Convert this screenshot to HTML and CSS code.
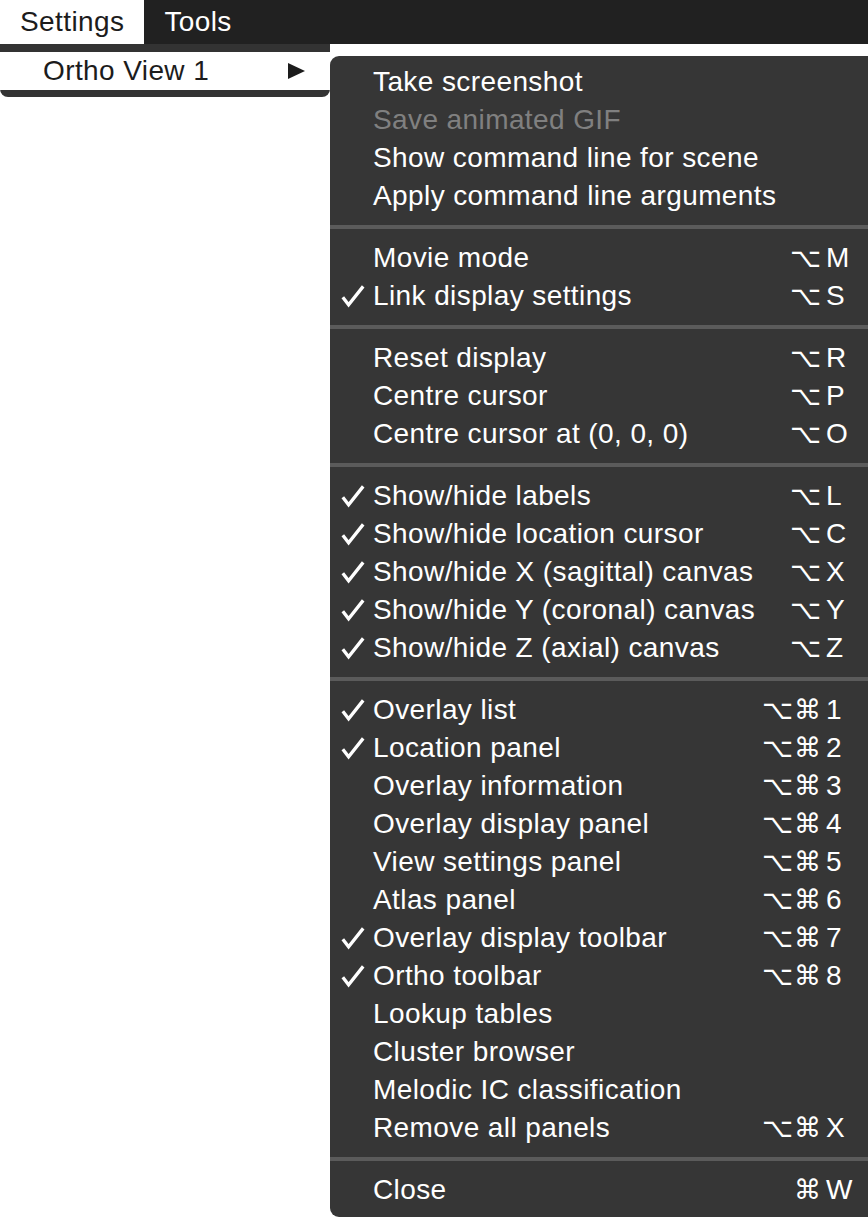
FILE: index.html
```html
<!DOCTYPE html>
<html>
<head>
<meta charset="utf-8">
<link rel="stylesheet" href="styles.css">
</head>
<body>
<div class="menubar">
  <div class="mb-item active">Settings</div>
  <div class="mb-item">Tools</div>
</div>
<div class="stage">
  <div class="dropdown">
    <div class="dd-row">
      <span class="dd-label">Ortho View 1</span>
      <svg class="arrow" width="17" height="16" viewBox="0 0 17 16"><polygon points="0,0 17,8 0,16" fill="#1c1c1c"/></svg>
    </div>
  </div>
  <div class="submenu">
    <div class="item"><span class="check"></span><span class="label">Take screenshot</span></div>
    <div class="item disabled"><span class="check"></span><span class="label">Save animated GIF</span></div>
    <div class="item"><span class="check"></span><span class="label">Show command line for scene</span></div>
    <div class="item"><span class="check"></span><span class="label">Apply command line arguments</span></div>
    <div class="sep"></div>
    <div class="item"><span class="check"></span><span class="label">Movie mode</span><span class="mods">⌥</span><span class="key">M</span></div>
    <div class="item"><span class="check"><svg class="tick" width="26" height="24" viewBox="0 0 26 24"><path d="M2.8 13.2 L8.6 20.8 L23.2 2.4"/></svg></span><span class="label">Link display settings</span><span class="mods">⌥</span><span class="key">S</span></div>
    <div class="sep"></div>
    <div class="item"><span class="check"></span><span class="label">Reset display</span><span class="mods">⌥</span><span class="key">R</span></div>
    <div class="item"><span class="check"></span><span class="label">Centre cursor</span><span class="mods">⌥</span><span class="key">P</span></div>
    <div class="item"><span class="check"></span><span class="label">Centre cursor at (0, 0, 0)</span><span class="mods">⌥</span><span class="key">O</span></div>
    <div class="sep"></div>
    <div class="item"><span class="check"><svg class="tick" width="26" height="24" viewBox="0 0 26 24"><path d="M2.8 13.2 L8.6 20.8 L23.2 2.4"/></svg></span><span class="label">Show/hide labels</span><span class="mods">⌥</span><span class="key">L</span></div>
    <div class="item"><span class="check"><svg class="tick" width="26" height="24" viewBox="0 0 26 24"><path d="M2.8 13.2 L8.6 20.8 L23.2 2.4"/></svg></span><span class="label">Show/hide location cursor</span><span class="mods">⌥</span><span class="key">C</span></div>
    <div class="item"><span class="check"><svg class="tick" width="26" height="24" viewBox="0 0 26 24"><path d="M2.8 13.2 L8.6 20.8 L23.2 2.4"/></svg></span><span class="label">Show/hide X (sagittal) canvas</span><span class="mods">⌥</span><span class="key">X</span></div>
    <div class="item"><span class="check"><svg class="tick" width="26" height="24" viewBox="0 0 26 24"><path d="M2.8 13.2 L8.6 20.8 L23.2 2.4"/></svg></span><span class="label">Show/hide Y (coronal) canvas</span><span class="mods">⌥</span><span class="key">Y</span></div>
    <div class="item"><span class="check"><svg class="tick" width="26" height="24" viewBox="0 0 26 24"><path d="M2.8 13.2 L8.6 20.8 L23.2 2.4"/></svg></span><span class="label">Show/hide Z (axial) canvas</span><span class="mods">⌥</span><span class="key">Z</span></div>
    <div class="sep"></div>
    <div class="item"><span class="check"><svg class="tick" width="26" height="24" viewBox="0 0 26 24"><path d="M2.8 13.2 L8.6 20.8 L23.2 2.4"/></svg></span><span class="label">Overlay list</span><span class="mods">⌥⌘</span><span class="key">1</span></div>
    <div class="item"><span class="check"><svg class="tick" width="26" height="24" viewBox="0 0 26 24"><path d="M2.8 13.2 L8.6 20.8 L23.2 2.4"/></svg></span><span class="label">Location panel</span><span class="mods">⌥⌘</span><span class="key">2</span></div>
    <div class="item"><span class="check"></span><span class="label">Overlay information</span><span class="mods">⌥⌘</span><span class="key">3</span></div>
    <div class="item"><span class="check"></span><span class="label">Overlay display panel</span><span class="mods">⌥⌘</span><span class="key">4</span></div>
    <div class="item"><span class="check"></span><span class="label">View settings panel</span><span class="mods">⌥⌘</span><span class="key">5</span></div>
    <div class="item"><span class="check"></span><span class="label">Atlas panel</span><span class="mods">⌥⌘</span><span class="key">6</span></div>
    <div class="item"><span class="check"><svg class="tick" width="26" height="24" viewBox="0 0 26 24"><path d="M2.8 13.2 L8.6 20.8 L23.2 2.4"/></svg></span><span class="label">Overlay display toolbar</span><span class="mods">⌥⌘</span><span class="key">7</span></div>
    <div class="item"><span class="check"><svg class="tick" width="26" height="24" viewBox="0 0 26 24"><path d="M2.8 13.2 L8.6 20.8 L23.2 2.4"/></svg></span><span class="label">Ortho toolbar</span><span class="mods">⌥⌘</span><span class="key">8</span></div>
    <div class="item"><span class="check"></span><span class="label">Lookup tables</span></div>
    <div class="item"><span class="check"></span><span class="label">Cluster browser</span></div>
    <div class="item"><span class="check"></span><span class="label">Melodic IC classification</span></div>
    <div class="item"><span class="check"></span><span class="label">Remove all panels</span><span class="mods">⌥⌘</span><span class="key">X</span></div>
    <div class="sep"></div>
    <div class="item"><span class="check"></span><span class="label">Close</span><span class="mods">⌘</span><span class="key">W</span></div>
  </div>
</div>
</body>
</html>
```
FILE: styles.css
```css
html, body {
  margin: 0;
  padding: 0;
  background: #ffffff;
}
body {
  font-family: "Liberation Sans", Arial, sans-serif;
  font-size: 28px;
  letter-spacing: 0.4px;
  width: 868px;
  height: 1218px;
  overflow: hidden;
}
.menubar {
  display: flex;
  height: 44px;
  background: #212121;
}
.mb-item {
  padding: 0 20px;
  line-height: 44px;
  color: #ffffff;
}
.mb-item.active {
  background: #ffffff;
  color: #1c1c1c;
}
.stage {
  display: flex;
  align-items: flex-start;
}
.dropdown {
  width: 330px;
  flex: none;
  background: #333333;
  padding: 8px 0 7px;
  border-radius: 0 0 8px 8px;
}
.dd-row {
  display: flex;
  align-items: center;
  height: 38px;
  background: #ffffff;
  padding-left: 43px;
  padding-right: 25px;
  color: #1c1c1c;
}
.dd-label {
  flex: 1;
  line-height: 38px;
}
.arrow {
  display: block;
}
.submenu {
  width: 538px;
  flex: none;
  margin-top: 12px;
  background: #363636;
  border-radius: 9px 0 0 9px;
  padding: 7px 0 8px;
  color: #ffffff;
}
.item {
  display: flex;
  align-items: center;
  height: 38px;
  line-height: 38px;
  padding-left: 10px;
}
.item.disabled {
  color: #808080;
}
.check {
  width: 33px;
  height: 24px;
  flex: none;
  display: flex;
  align-items: center;
}
.tick {
  display: block;
  fill: none;
  stroke: #ffffff;
  stroke-width: 3.3;
  stroke-linecap: butt;
  stroke-linejoin: miter;
}
.label {
  flex: 1;
  white-space: nowrap;
}
.mods {
  font-family: "DejaVu Sans", sans-serif;
  font-size: 27px;
  text-align: right;
  letter-spacing: 1px;
  margin-right: 4px;
}
.key {
  width: 42px;
  flex: none;
}
.sep {
  height: 4px;
  margin: 10px 0;
  background: #5b5b5b;
}
```
